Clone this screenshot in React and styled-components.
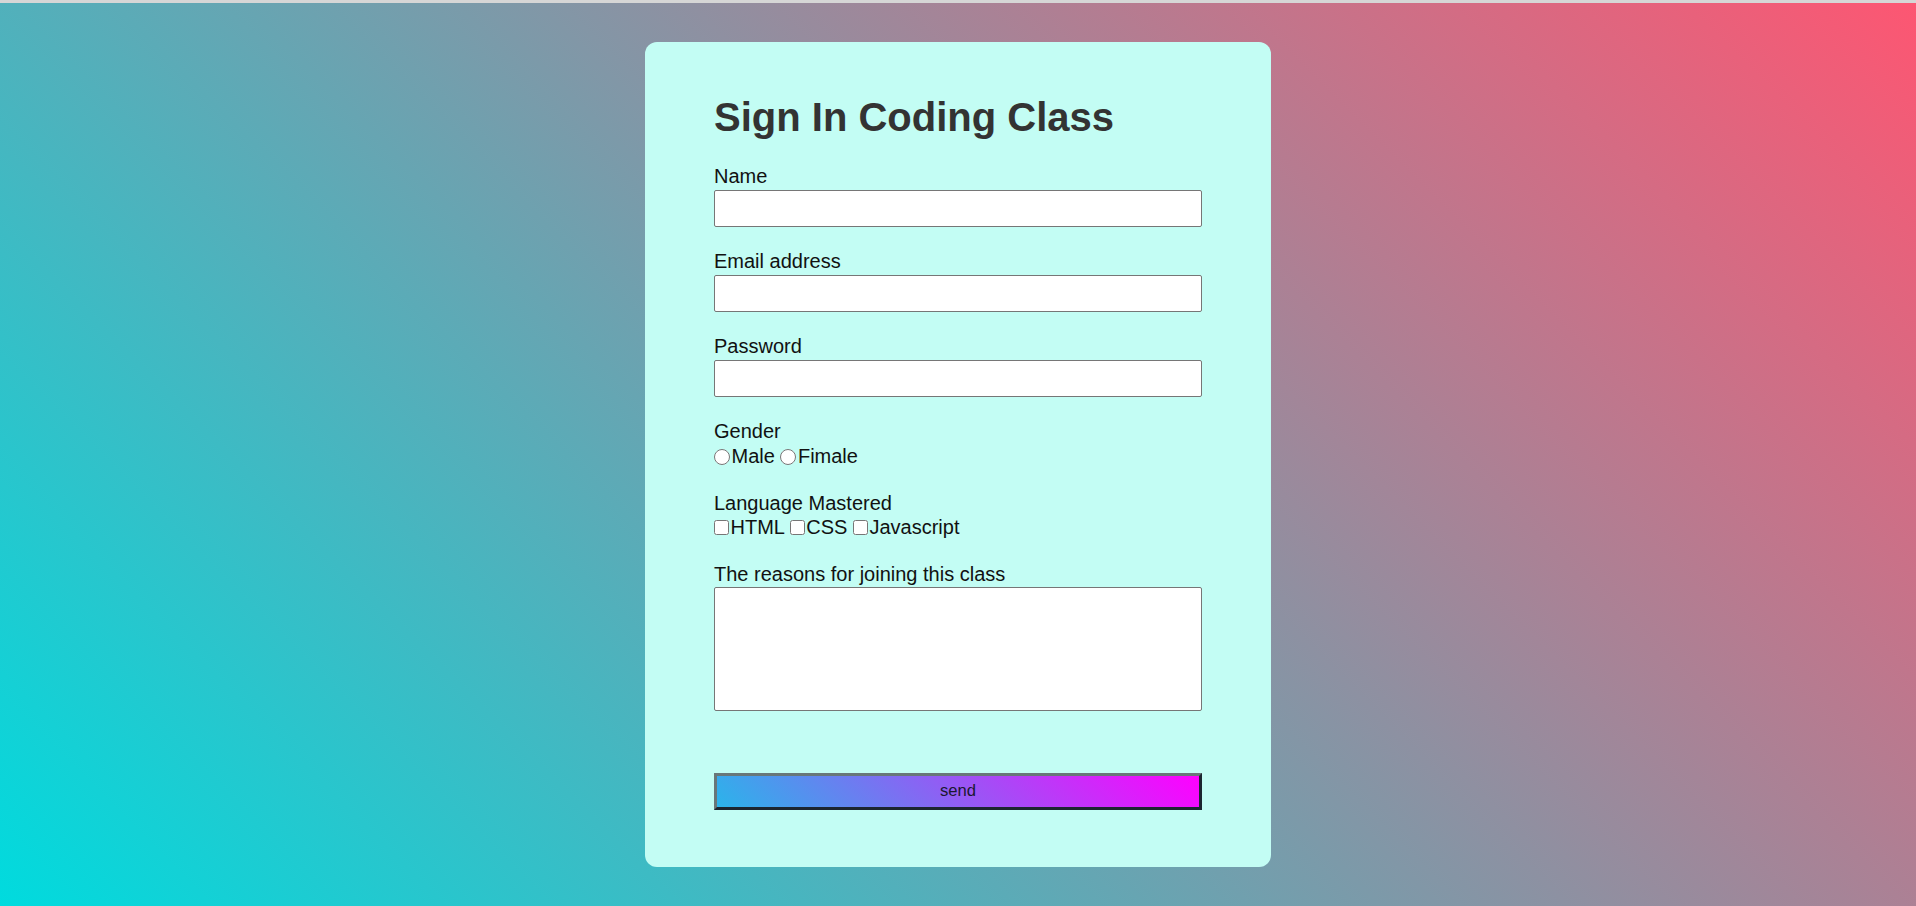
import styled, { createGlobalStyle } from 'styled-components';

const GlobalStyle = createGlobalStyle`
  * {
    box-sizing: border-box;
  }

  body {
    margin: 0;
    font-family: "Liberation Sans", Arial, sans-serif;
  }
`;

const StyledPage = styled.main`
  display: flex;
  justify-content: center;
  align-items: center;
  min-height: 100vh;
  border-top: 3px solid #d6d6d6;
  background: linear-gradient(45deg, #00dbde, #fd5672);
`;

const StyledCard = styled.form`
  display: flex;
  flex-direction: column;
  width: 626px;
  padding: 52px 69px 57px;
  border-radius: 12px;
  background-color: #c3fdf4;
`;

const StyledTitle = styled.h1`
  margin: 0 0 25px;
  font-size: 40px;
  line-height: 46px;
  font-weight: 700;
  color: #333;
`;

const StyledField = styled.div`
  display: flex;
  flex-direction: column;
  margin-bottom: 23.6px;
`;

const StyledLabel = styled.label`
  display: block;
  margin-bottom: 1.5px;
  font-size: 20px;
  line-height: 23px;
  color: #111;
`;

const StyledInput = styled.input`
  width: 100%;
  height: 37px;
  margin: 0;
  padding: 2px 4px;
  border: 1px solid #767676;
  border-radius: 2px;
  background-color: #fff;
  font: inherit;
`;

const StyledTextArea = styled.textarea`
  width: 100%;
  height: 124px;
  margin: -1px 0 0;
  padding: 2px 4px;
  border: 1px solid #767676;
  border-radius: 2px;
  background-color: #fff;
  font: inherit;
  resize: none;
`;

const StyledOptions = styled.div`
  font-size: 20px;
  line-height: 23.4px;
  color: #111;
  white-space: nowrap;
`;

const StyledOption = styled.label`
  display: inline;
`;

const StyledTick = styled.input`
  width: ${(props) => props.$size};
  height: ${(props) => props.$size};
  margin: 0 1.5px 0 0;
  vertical-align: ${(props) => props.$drop};
`;

const StyledButton = styled.button`
  width: 100%;
  height: 37px;
  margin-top: 38.5px;
  border: 3px solid;
  border-color: #687779 #1c2630 #1c2630 #687779;
  background: linear-gradient(45deg, #2bb4ea, #ff00ff);
  font-family: "Liberation Sans", Arial, sans-serif;
  font-size: 16.6px;
  color: #1a1830;
  cursor: pointer;
`;

export default function App() {
  return (
    <>
      <GlobalStyle />
      <StyledPage>
        <StyledCard onSubmit={(e) => e.preventDefault()}>
          <StyledTitle>Sign In Coding Class</StyledTitle>
          <StyledField>
            <StyledLabel htmlFor="name">Name</StyledLabel>
            <StyledInput type="text" id="name" />
          </StyledField>
          <StyledField>
            <StyledLabel htmlFor="email">Email address</StyledLabel>
            <StyledInput type="email" id="email" />
          </StyledField>
          <StyledField>
            <StyledLabel htmlFor="password">Password</StyledLabel>
            <StyledInput type="password" id="password" />
          </StyledField>
          <StyledField>
            <StyledLabel>Gender</StyledLabel>
            <StyledOptions>
              <StyledOption>
                <StyledTick type="radio" name="gender" $size="16px" $drop="-2px" />
                Male
              </StyledOption>{' '}
              <StyledOption>
                <StyledTick type="radio" name="gender" $size="16px" $drop="-2px" />
                Fimale
              </StyledOption>
            </StyledOptions>
          </StyledField>
          <StyledField>
            <StyledLabel>Language Mastered</StyledLabel>
            <StyledOptions>
              <StyledOption>
                <StyledTick type="checkbox" $size="15px" $drop="-1px" />
                HTML
              </StyledOption>{' '}
              <StyledOption>
                <StyledTick type="checkbox" $size="15px" $drop="-1px" />
                CSS
              </StyledOption>{' '}
              <StyledOption>
                <StyledTick type="checkbox" $size="15px" $drop="-1px" />
                Javascript
              </StyledOption>
            </StyledOptions>
          </StyledField>
          <StyledField>
            <StyledLabel htmlFor="reasons">The reasons for joining this class</StyledLabel>
            <StyledTextArea id="reasons" />
          </StyledField>
          <StyledButton type="submit">send</StyledButton>
        </StyledCard>
      </StyledPage>
    </>
  );
}
